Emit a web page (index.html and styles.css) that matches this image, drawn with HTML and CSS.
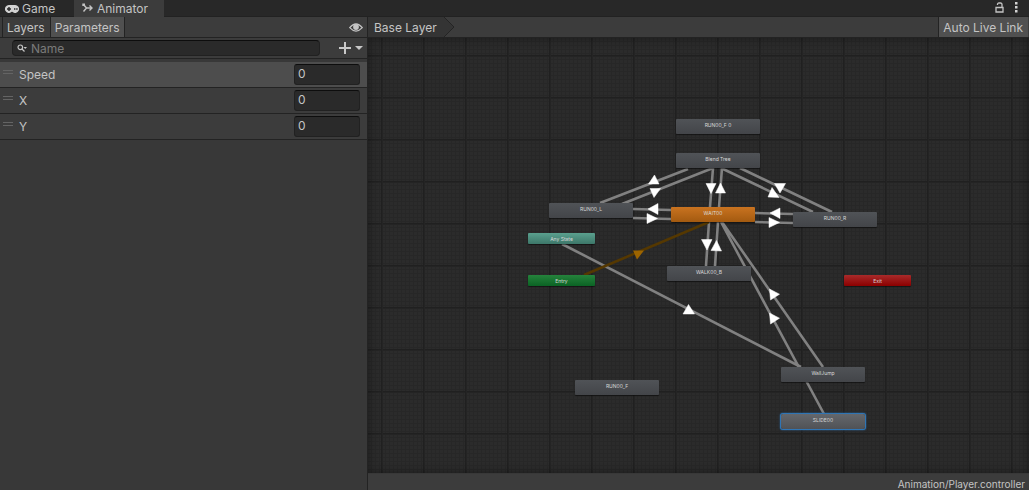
FILE: index.html
```
<!DOCTYPE html>
<html lang="en">
<head>
  <meta charset="UTF-8" />
  <meta name="viewport" content="width=device-width, initial-scale=1.0"/>
  <title>Animator</title>
  <link rel="stylesheet" href="styles.css">
</head>
<body>

  <header class="tabs">
    <button class="tab tab-game" type="button">
      <svg width="14" height="8" viewBox="0 0 14 8">
        <path fill="#d2d2d2" fill-rule="evenodd" d="M4 0h6a4 4 0 1 1-2.800 6.800h-.4A4 4 0 1 1 4 0zM3.300 2v1.300H2v1.400h1.300V6h1.400V4.700H6V3.300H4.700V2zM9 3.200v1.600h1.400V3.200zM11.200 3.200v1.600h1.400V3.200z"/>
      </svg>
      Game
    </button>
    <button class="tab active" type="button">
      <svg width="11" height="11" viewBox="0 0 11 11" fill="none" stroke="#c4c4c4" stroke-width="1.400">
        <path d="M1.500 1.500l3 3.500H10M1.500 8.500l3-3.500M7.500 2.500L10 5 7.500 7.500M1 3V1.200h2"/>
      </svg>
      Animator
    </button>
    <div class="window-buttons">
      <button type="button" aria-label="Lock">
        <svg width="9" height="11" viewBox="0 0 9 11" fill="none" stroke="#c4c4c4" stroke-width="1.300">
          <path d="M1 5.500h7v4.500H1zM2.500 3V2.500q0-1.500 1.500-1.500h1.500Q7 1 7 2.500v3"/>
        </svg>
      </button>
      <button type="button" aria-label="Menu">
        <svg width="3" height="11" viewBox="0 0 3 11" fill="#d2d2d2">
          <path d="M0 0h2.500v2.500H0zM0 4h2.500v2.500H0zM0 8h2.500v2.500H0z"/>
        </svg>
      </button>
    </div>
  </header>

  <main class="window">
    <section class="sidebar">
      <div class="toolbar">
        <button class="mode" type="button">Layers</button>
        <button class="mode selected" type="button">Parameters</button>
        <button class="eye" type="button" aria-label="Toggle panel">
          <svg width="14" height="9" viewBox="0 0 14 9">
            <path d="M.7 4.700Q7-2.800 13.300 4.700 7 11.500.7 4.700z" fill="none" stroke="#c4c4c4" stroke-width="1.200"/>
            <circle cx="7" cy="4" r="2.900" fill="#c4c4c4"/>
          </svg>
        </button>
      </div>

      <div class="search-row">
        <label class="search">
          <svg width="10" height="8" viewBox="0 0 10 8">
            <path d="M5 5l2.500 2.500" stroke="#c4c4c4" stroke-width="1.300"/>
            <circle cx="3.300" cy="3.300" r="2.300" fill="none" stroke="#c4c4c4" stroke-width="1.200"/>
            <path d="M6.500 3H10L8.200 5z" fill="#c4c4c4"/>
          </svg>
          <input type="text" placeholder="Name" aria-label="Search parameters" />
        </label>
        <button class="add" type="button" aria-label="Add parameter">
          <svg width="24" height="12" viewBox="0 0 24 12" fill="#c8c8c8">
            <path d="M5 0h2v5h5v2H7v5H5V7H0V5h5zM16 4h8l-4 4z"/>
          </svg>
        </button>
      </div>

      <div class="params">
        <div class="param selected">
          <span class="handle"></span>
          <label for="speed">Speed</label>
          <input type="text" id="speed" value="0" />
        </div>
        <div class="param">
          <span class="handle"></span>
          <label for="paramX">X</label>
          <input type="text" id="paramX" value="0" />
        </div>
        <div class="param">
          <span class="handle"></span>
          <label for="paramY">Y</label>
          <input type="text" id="paramY" value="0" />
        </div>
      </div>
    </section>

    <section class="graph">
      <div class="toolbar">
        <button class="crumb" type="button">Base Layer</button>
        <svg class="crumb-end" width="11" height="20" viewBox="0 0 11 20">
          <path d="M0 0l10 10L0 20z" fill="#343434"/>
          <path d="M0 0l10 10L0 20" fill="none" stroke="#242424"/>
        </svg>
        <button class="live" type="button">Auto Live Link</button>
      </div>

      <div class="canvas">
        <svg class="links" viewBox="368 38 661 435" width="661" height="435">
          <g stroke="#818181" stroke-width="2.600">
            <path d="M688 169L600 203M713 168L622 204"/>
            <path d="M713 168L710 207M722 168L719 207"/>
            <path d="M721 168L813 212M740 168L832 212"/>
            <path d="M633 209L671 210M633 218L671 219"/>
            <path d="M755 213L793 214M755 222L793 223"/>
            <path d="M709 222L706 266M718 222L715 266"/>
            <path d="M722 222L823 367M721 222L824 414"/>
            <path d="M562 244L801 367"/>
          </g>
          <path d="M584 275L709 222" stroke="#553801" stroke-width="2.600"/>
          <path d="M633 250.500h11l-7 9z" fill="#9c6400"/>
          <g fill="#fff" stroke="#fff" stroke-width=".5">
            <path d="M648.500 184h10.500l-4.500-9z"/>
            <path d="M650 188.500h10.500l-6.500 9z"/>
            <path d="M706 183.500h10l-5 10z"/>
            <path d="M715.500 193h10l-5-10z"/>
            <path d="M768 197l11 .5-7-10z"/>
            <path d="M774.500 183.500h11l-5.500 9.500z"/>
            <path d="M648 209l10-5.500v11z"/>
            <path d="M657.500 218.500l-10.500-5v10z"/>
            <path d="M770 213l10-5v10.500z"/>
            <path d="M779.500 222.500l-10.500-5v10z"/>
            <path d="M701.500 239.500h10.500l-5 10.500z"/>
            <path d="M711 250.500l10.500.5-5-10.500z"/>
            <path d="M769.500 289l10 5.200-9 5.800z"/>
            <path d="M769.500 313l10 5.200-9 5.800z"/>
            <path d="M683 314h11.500l-6-9.500z"/>
          </g>
        </svg>

        <div class="node run-f0">RUN00_F 0</div>
        <div class="node blend">Blend Tree</div>
        <div class="node run-l">RUN00_L</div>
        <div class="node wait">WAIT00</div>
        <div class="node run-r">RUN00_R</div>
        <div class="node walk">WALK00_B</div>
        <div class="node jump">WallJump</div>
        <div class="node run-f">RUN00_F</div>
        <div class="node slide">SLIDE00</div>
        <div class="node small any">Any State</div>
        <div class="node small entry">Entry</div>
        <div class="node small exit">Exit</div>
      </div>

      <footer class="path">Animation/Player.controller</footer>
    </section>
  </main>

</body>
</html>
```
FILE: styles.css
```
* {
  box-sizing: border-box;
}

body {
  margin: 0;
  height: 100vh;
  display: flex;
  flex-direction: column;
  overflow: hidden;
  background: #383838;
  color: #c4c4c4;
  font-family: Inter, sans-serif;
  font-size: 12px;
}

button, input {
  font: inherit;
  color: inherit;
  border: none;
  padding: 0;
  margin: 0;
  background: none;
}

svg {
  display: block;
  flex: none;
}

.tabs {
  display: flex;
  height: 17px;
  background: #282828;
  border-bottom: 1px solid #222;
}

.tab {
  display: flex;
  align-items: center;
  gap: 4px;
  height: 17px;
  padding: 0 16px 0 8px;
}

.tab-game {
  width: 74px;
  gap: 3px;
  padding: 0 0 0 5px;
}

.tab.active {
  background: #3c3c3c;
}

.window-buttons {
  display: flex;
  align-items: center;
  gap: 11px;
  margin-left: auto;
  padding: 0 11px 2px 0;
}

.window {
  display: flex;
  flex: 1;
  min-height: 0;
}

.sidebar {
  width: 368px;
  border-right: 1px solid #232323;
}

.toolbar {
  display: flex;
  height: 21px;
  background: #3c3c3c;
  border-bottom: 1px solid #232323;
}

.mode {
  padding: 0 4px;
  border-right: 1px solid #232323;
}

.mode:first-child {
  margin-left: 2px;
  padding: 0 5px 0 4px;
  border-left: 1px solid #232323;
}

.mode.selected,
.live {
  background: #505050;
}

.eye {
  margin-left: auto;
  padding: 1px 4px 0 0;
}

.search-row {
  display: flex;
  align-items: center;
  height: 21px;
  padding: 0 4px 0 12px;
  background: #3c3c3c;
  border-bottom: 1px solid #232323;
}

.search {
  display: flex;
  flex: 1;
  align-items: center;
  gap: 4px;
  height: 16px;
  padding: 0 4px;
  background: #2a2a2a;
  border: 1px solid #212121;
  border-top-color: #0d0d0d;
  border-radius: 4px;
}

.search input {
  flex: 1;
  min-width: 0;
  outline: none;
}

.search input::placeholder {
  color: #7a7a7a;
  opacity: 1;
}

.add {
  margin-left: 19px;
}

.params {
  padding-top: 3px;
}

.param {
  display: flex;
  align-items: center;
  height: 26px;
  padding: 0 7px 0 3px;
  background: #3c3c3c;
  border-bottom: 1px solid #232323;
}

.param.selected {
  background: #4d4d4d;
}

.handle {
  width: 10px;
  height: 4px;
  margin: 0 6px 5px 0;
  border: solid #646464;
  border-width: 1px 0;
}

.param label {
  flex: 1;
}

.param input {
  width: 66px;
  height: 21px;
  padding: 0 3px 2px;
  background: #2a2a2a;
  border: 1px solid #212121;
  border-top-color: #0d0d0d;
  border-radius: 3px;
}

.graph {
  display: flex;
  flex: 1;
  flex-direction: column;
  min-width: 0;
}

.crumb {
  padding: 0 0 0 6px;
  width: 76px;
  text-align: left;
  white-space: nowrap;
  background: #343434;
}

.live {
  margin-left: auto;
  margin-right: 1px;
  padding: 0 5px 0 4px;
  border-left: 1px solid #232323;
}

.canvas {
  position: relative;
  flex: 1;
  overflow: hidden;
  background-color: #2b2b2b;
  background-image:
    linear-gradient(to right, #202020 1px, #242424 1px 2px, transparent 2px),
    linear-gradient(to bottom, #202020 1px, #242424 1px 2px, transparent 2px),
    repeating-linear-gradient(to right, #272727 0 1px, transparent 1px 4px),
    repeating-linear-gradient(to bottom, #272727 0 1px, transparent 1px 4px);
  background-size: 42px 42px;
  background-position: 13px 17px;
}

.canvas::after {
  content: "";
  position: absolute;
  inset: 0;
  box-shadow: inset 0 0 8px rgba(0, 0, 0, 0.4);
}

.links {
  position: absolute;
  left: 0;
  top: 0;
}

.node {
  position: absolute;
  width: 84px;
  height: 15px;
  border-radius: 1px;
  background: linear-gradient(#505357, #434549);
  box-shadow: 0 1px 1px rgba(0, 0, 0, 0.5);
  color: #d8d8d8;
  font-size: 5px;
  line-height: 13px;
  text-align: center;
}

.node.small {
  width: 67px;
  height: 11px;
  line-height: 12px;
}

.run-f0 { left: 308px; top: 81px; }
.blend { left: 308px; top: 115px; }
.run-l { left: 181px; top: 165px; }
.run-r { left: 425px; top: 174px; }
.walk { left: 299px; top: 228px; }
.jump { left: 413px; top: 329px; }
.run-f { left: 207px; top: 342px; }

.wait {
  left: 303px;
  top: 169px;
  background: linear-gradient(#c97320, #a35a10);
}

.slide {
  left: 413px;
  top: 376px;
  border-radius: 2px;
  background: linear-gradient(#64676c, #505256);
  box-shadow: 0 0 0 1px #2f75b5, 0 0 2px 1px #2f6ca5;
}

.any {
  left: 160px;
  top: 195px;
  background: linear-gradient(#5aa08e, #3d7769);
}

.entry {
  left: 160px;
  top: 237px;
  background: linear-gradient(#25833c, #0b6324);
}

.exit {
  left: 476px;
  top: 237px;
  background: linear-gradient(#a82a2a, #8c0000);
}

.path {
  height: 17px;
  padding-right: 4px;
  background: #3c3c3c;
  border-top: 1px solid #383838;
  font-size: 10px;
  line-height: 20px;
  text-align: right;
}
```
